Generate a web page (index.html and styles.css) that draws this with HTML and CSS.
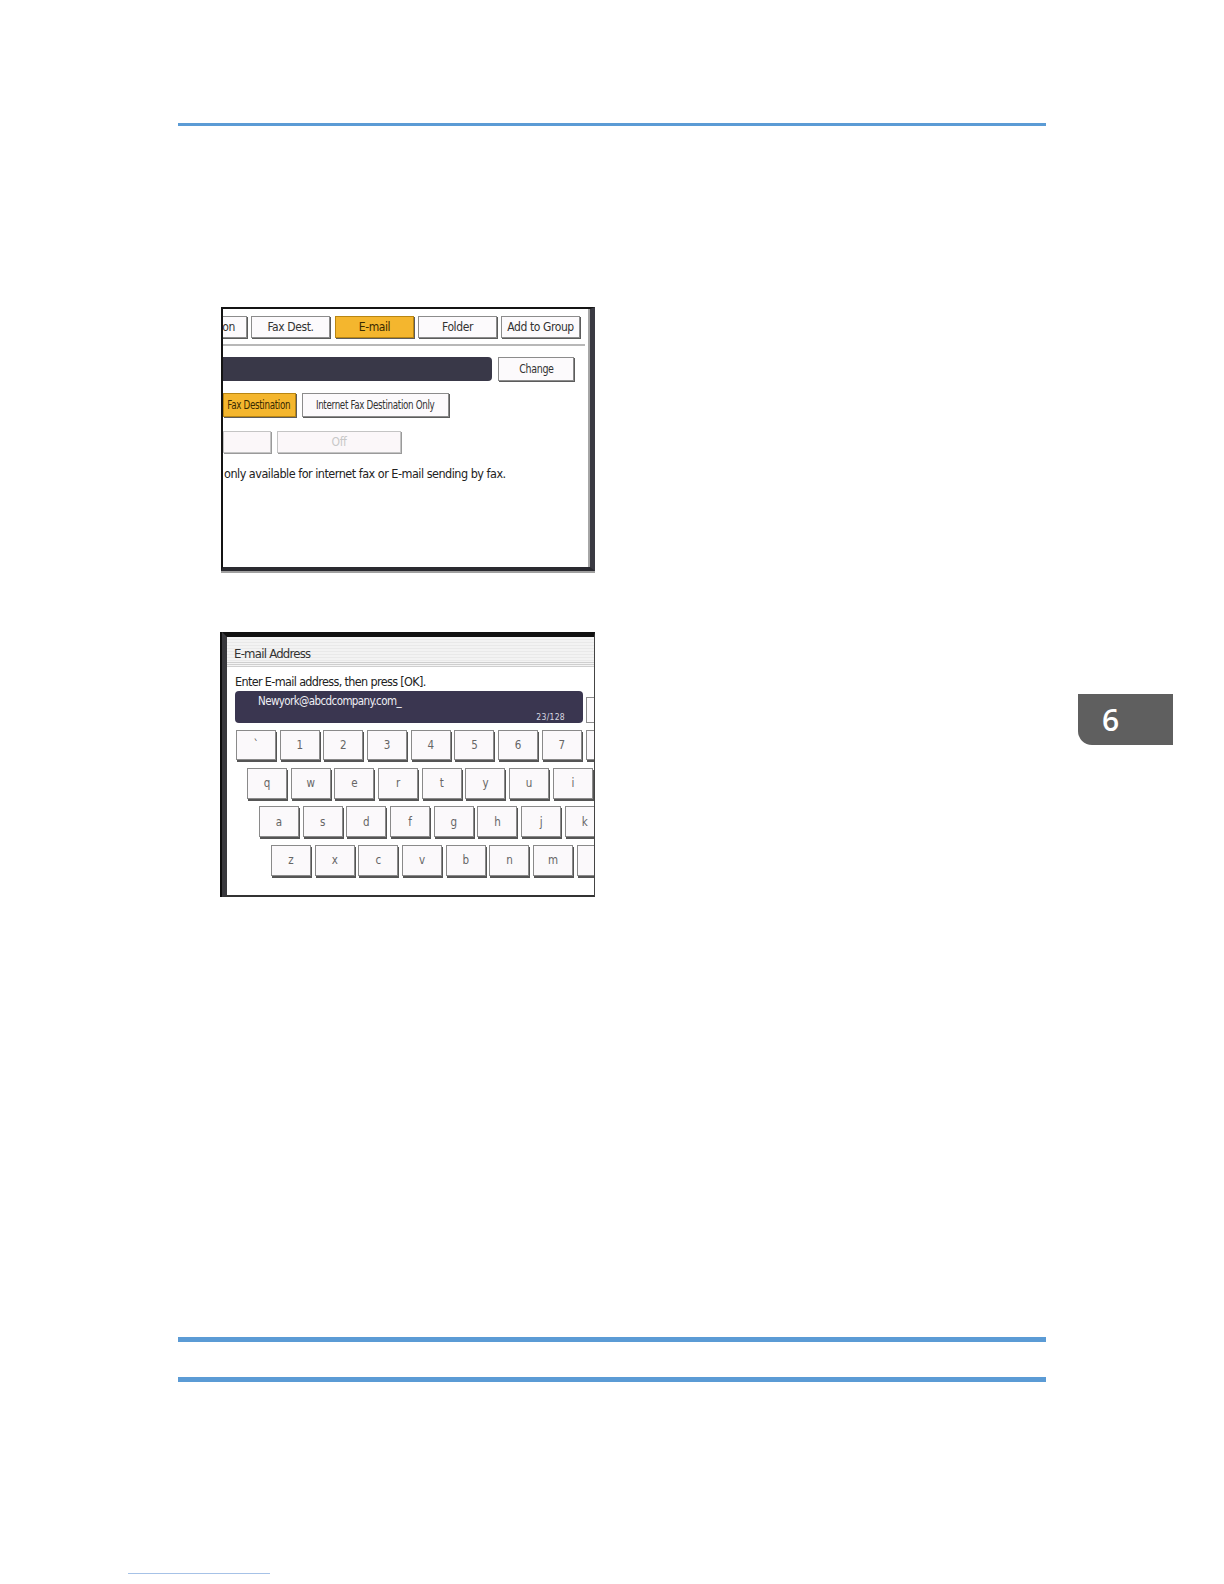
FILE: index.html
```html
<!DOCTYPE html>
<html>
<head>
<meta charset="utf-8">
<link rel="stylesheet" href="styles.css">
</head>
<body>
<div class="page">
  <div class="rule rule-top"></div>

  <div class="shot shot1">
    <div class="s1-tabs">
      <div class="btn tab-partial">on</div>
      <div class="btn tab-fax">Fax Dest.</div>
      <div class="btn btn-yellow tab-mail">E-mail</div>
      <div class="btn tab-folder">Folder</div>
      <div class="btn tab-group">Add to Group</div>
    </div>
    <div class="s1-sep"></div>
    <div class="s1-row s1-row2">
      <div class="darkbar"></div>
      <div class="btn btn-change"><span class="narrow-mid">Change</span></div>
    </div>
    <div class="s1-row s1-row3">
      <div class="btn btn-yellow btn-faxdest"><span class="narrow">Fax Destination</span></div>
      <div class="btn btn-inet"><span class="narrow">Internet Fax Destination Only</span></div>
    </div>
    <div class="s1-row s1-row4">
      <div class="btn btn-disabled btn-dis1"></div>
      <div class="btn btn-disabled btn-off">Off</div>
    </div>
    <p class="s1-note">only available for internet fax or E-mail sending by fax.</p>
  </div>

  <div class="shot shot2">
    <div class="s2-title">E-mail Address</div>
    <div class="s2-lines"></div>
    <p class="s2-instr">Enter E-mail address, then press [OK].</p>
    <div class="s2-inputrow">
      <div class="s2-input">
        <span class="s2-value">Newyork@abcdcompany.com_</span>
        <span class="s2-count">23/128</span>
      </div>
      <div class="s2-sidebtn"></div>
    </div>
    <div class="keys">
      <div class="keyrow kr1">
        <span class="key">`</span><span class="key">1</span><span class="key">2</span><span class="key">3</span><span class="key">4</span><span class="key">5</span><span class="key">6</span><span class="key">7</span><span class="key"></span>
      </div>
      <div class="keyrow kr2">
        <span class="key">q</span><span class="key">w</span><span class="key">e</span><span class="key">r</span><span class="key">t</span><span class="key">y</span><span class="key">u</span><span class="key">i</span><span class="key"></span>
      </div>
      <div class="keyrow kr3">
        <span class="key">a</span><span class="key">s</span><span class="key">d</span><span class="key">f</span><span class="key">g</span><span class="key">h</span><span class="key">j</span><span class="key">k</span>
      </div>
      <div class="keyrow kr4">
        <span class="key">z</span><span class="key">x</span><span class="key">c</span><span class="key">v</span><span class="key">b</span><span class="key">n</span><span class="key">m</span><span class="key"></span>
      </div>
    </div>
  </div>

  <div class="rule rule-b1"></div>
  <div class="rule rule-b2"></div>
  <div class="footer-line"></div>

  <div class="chapter-tab">6</div>
</div>
</body>
</html>
```

FILE: styles.css
```css
* { box-sizing: border-box; }

body {
  margin: 0;
  background: #ffffff;
  font-family: "DejaVu Sans Condensed", "DejaVu Sans", sans-serif;
}

.page {
  position: relative;
  width: 1224px;
  height: 1584px;
  padding-top: 123px;
  overflow: hidden;
}

.rule {
  margin-left: 178px;
  width: 868px;
  background: #5b9bd5;
}
.rule-top { height: 3px; }
.rule-b1 { height: 5px; margin-top: 440px; }
.rule-b2 { height: 5px; margin-top: 35px; }

.footer-line {
  margin-top: 191px;
  margin-left: 128px;
  width: 142px;
  height: 1px;
  background: #a6c2e7;
}

/* ---------- screenshots ---------- */
.shot {
  position: relative;
  overflow: hidden;
  background: #ffffff;
  color: #333;
}

.shot1 {
  margin: 181px 0 0 221px;
  width: 374px;
  height: 264px;
  border-left: 2px solid #141414;
  border-top: 2px solid #141414;
  border-bottom: 4px solid #2a2a30;
  border-right: 5px solid #3a3a42;
  box-shadow: inset -2px 0 0 #a6a6a6, 0 2px 0 #a0a0a0;
}

.btn {
  flex: none;
  height: 100%;
  display: flex;
  align-items: center;
  justify-content: center;
  background: #fcfafc;
  border: 1px solid #8c8c8c;
  box-shadow: 1px 1px 0 #5c5c5c;
  font-size: 12px;
  letter-spacing: -0.4px;
  color: #333;
  white-space: nowrap;
}
.btn-yellow {
  background: #f4b62e;
  border-color: #b98612;
  color: #3a2a00;
}
.btn-disabled {
  background: #fbf7f9;
  border-color: #c4c4c4;
  box-shadow: 1px 1px 0 #9a9a9a;
  color: #c8c8c8;
}
.narrow {
  display: inline-block;
  transform: scaleX(0.81);
}
.narrow-mid {
  display: inline-block;
  transform: scaleX(0.88);
}

.s1-tabs {
  display: flex;
  height: 22px;
  margin-top: 7px;
}
.tab-partial { width: 40px; margin-left: -16px; justify-content: flex-end; padding-right: 11px; }
.tab-fax { width: 79px; margin-left: 4px; }
.tab-mail { width: 79px; margin-left: 5px; }
.tab-folder { width: 79px; margin-left: 4px; }
.tab-group { width: 79px; margin-left: 4px; }

.s1-sep {
  margin-top: 6px;
  width: 362px;
  height: 2px;
  background: #b8b8b8;
}

.s1-row { display: flex; }
.s1-row2 { height: 24px; margin-top: 11px; }
.s1-row3 { height: 24px; margin-top: 12px; }
.s1-row4 { height: 22px; margin-top: 14px; }

.darkbar {
  flex: none;
  width: 269px;
  height: 100%;
  background: #393848;
  border-radius: 0 4px 4px 0;
}
.btn-change { width: 76px; margin-left: 6px; }
.btn-faxdest { width: 73px; padding-right: 1px; }
.btn-inet { width: 147px; margin-left: 6px; }
.btn-dis1 { width: 48px; }
.btn-off { width: 124px; margin-left: 6px; }

.s1-note {
  margin: 13px 0 0 1px;
  font-size: 12.5px;
  line-height: 16px;
  letter-spacing: -0.5px;
  color: #222;
  white-space: nowrap;
}

/* second screenshot */
.shot2 {
  margin: 61px 0 0 222px;
  width: 373px;
  height: 265px;
  border-top: 5px solid #101010;
  border-left: 5px solid #38383c;
  border-right: 1px solid #444;
  border-bottom: 2px solid #333;
  box-shadow: -2px 0 0 #0d0d0d;
}
.shot2::before {
  content: "";
  position: absolute;
  left: 0;
  top: -2px;
  width: 33px;
  height: 2px;
  background: #8a8a8a;
}

.s2-title {
  height: 25px;
  padding: 8px 0 0 7px;
  background: repeating-linear-gradient(#f3f3f3 0 2px, #e9e9e9 2px 3px);
  font-size: 13px;
  line-height: 17px;
  letter-spacing: -0.75px;
  color: #333;
}
.s2-lines {
  height: 5px;
  background: repeating-linear-gradient(#cfcfcf 0 1px, #f4f4f4 1px 2px);
}
.s2-instr {
  margin: 7px 0 0 8px;
  font-size: 12.5px;
  line-height: 16px;
  letter-spacing: -0.65px;
  color: #222;
  white-space: nowrap;
}
.s2-inputrow {
  display: flex;
  height: 32px;
  margin-top: 1px;
}
.s2-input {
  flex: none;
  width: 348px;
  margin-left: 8px;
  background: #3a3650;
  border-radius: 4px;
  display: flex;
  flex-direction: column;
  justify-content: space-between;
  padding: 2px 18px 1px 23px;
  color: #eeeef4;
}
.s2-value {
  font-size: 11.5px;
  letter-spacing: -0.6px;
  line-height: 16px;
}
.s2-count {
  align-self: flex-end;
  font-size: 8.5px;
  line-height: 10px;
  letter-spacing: 0.3px;
  color: #d8d8e0;
}
.s2-sidebtn {
  flex: none;
  align-self: flex-end;
  width: 30px;
  height: 26px;
  margin-left: 3px;
  background: #fcfafc;
  border: 1px solid #8c8c8c;
}

.keys {
  display: flex;
  flex-direction: column;
  gap: 7.5px;
  margin-top: 7px;
}
.keyrow {
  display: flex;
  gap: 3.7px;
  height: 31px;
}
.kr1 { height: 30px; padding-left: 9px; }
.kr2 { padding-left: 20px; }
.kr3 { padding-left: 32px; }
.kr4 { padding-left: 44px; }

.key {
  flex: none;
  width: 40px;
  height: 100%;
  display: flex;
  align-items: center;
  justify-content: center;
  background: #fbf9fb;
  border: 1px solid #8a8a8a;
  box-shadow: 1px 2px 0 #555;
  font-size: 11.5px;
  color: #666;
}

/* ---------- chapter tab ---------- */
.chapter-tab {
  position: absolute;
  left: 1078px;
  top: 694px;
  width: 95px;
  height: 51px;
  display: flex;
  align-items: center;
  padding-left: 24px;
  background: #5f5f5f;
  border-radius: 0 0 0 14px;
  color: #ffffff;
  font-family: "Open Sans", "Liberation Sans", sans-serif;
  font-weight: 600;
  font-size: 30px;
}
```
